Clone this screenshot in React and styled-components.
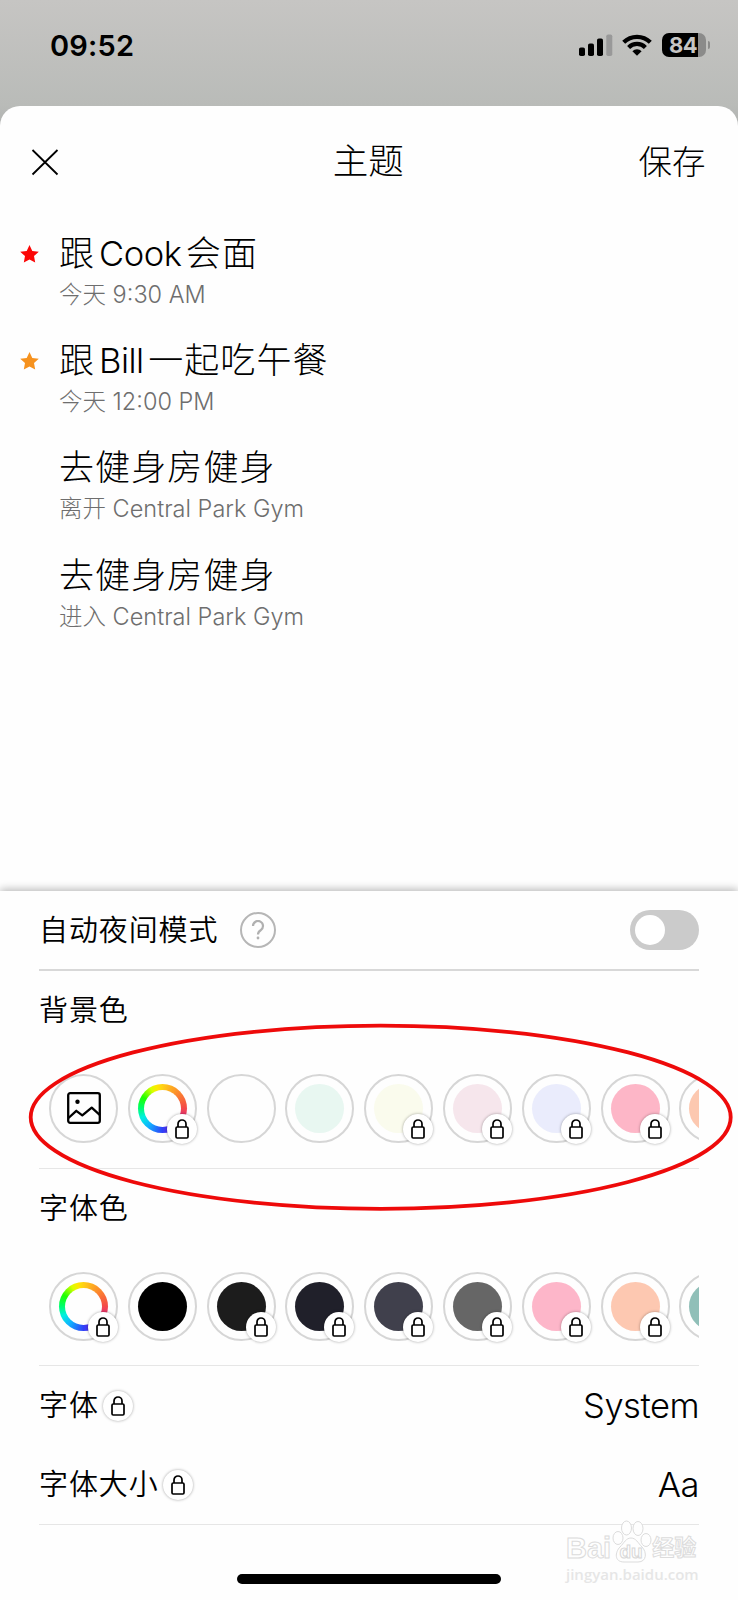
import React from "react";
import styled, { createGlobalStyle } from "styled-components";

const GlobalStyle = createGlobalStyle`
  * {
    box-sizing: border-box;
  }
  body {
    margin: 0;
    background-color: #fefefe;
    color: #000;
    font-family: Inter, "Noto Sans CJK SC", sans-serif;
    font-weight: 300;
  }
`;

const Container = styled.div`
  position: relative;
  width: 738px;
  height: 1600px;
  display: flex;
  flex-direction: column;
  overflow: hidden;
  background: linear-gradient(#c6c5c3, #b9bbb8 106px, #a9abaa 140px);
`;

const StatusBar = styled.div`
  flex: none;
  height: 106px;
  padding: 0 28px 16px 50px;
  display: flex;
  align-items: center;
  justify-content: space-between;
`;
const Time = styled.span`
  font-size: 29px;
  font-weight: 600;
  letter-spacing: 0.2px;
`;
const StatusIcons = styled.div`
  display: flex;
  align-items: center;
`;
const Signal = styled.svg`
  margin-right: 9px;
`;
const Wifi = styled.svg`
  margin-right: 10px;
`;
const Battery = styled.div`
  width: 44px;
  height: 24px;
  padding-right: 2px;
  display: flex;
  align-items: center;
  justify-content: center;
  border-radius: 7px;
  background: linear-gradient(to right, #000 36.5px, #8b8b8a 36.5px);
  color: #c6c5c3;
  font-size: 22px;
  font-weight: 700;
  letter-spacing: -0.5px;
`;
const BatteryTip = styled.div`
  width: 2px;
  height: 8px;
  margin-left: 2px;
  border-radius: 0 3px 3px 0;
  background-color: #8b8b8a;
`;

const Sheet = styled.div`
  flex: 1;
  display: flex;
  flex-direction: column;
  border-radius: 20px 20px 0 0;
  background-color: #fefefe;
`;

const Header = styled.div`
  height: 112px;
  padding: 0 32.5px 0 31px;
  display: grid;
  grid-template-columns: 1fr auto 1fr;
  align-items: center;
`;
const CloseButton = styled.button`
  width: 28px;
  height: 28px;
  padding: 0;
  border: none;
  background: none;
`;
const HeaderTitle = styled.div`
  font-size: 35.5px;
  line-height: 50px;
`;
const SaveButton = styled.button`
  justify-self: end;
  padding: 0;
  border: none;
  background: none;
  color: #000;
  font: inherit;
  font-size: 33.5px;
  line-height: 50px;
`;

const ReminderList = styled.div`
  flex: 1;
  padding-top: 9px;
`;
const Reminder = styled.div`
  height: 107.2px;
  padding: 4px 0 0 20px;
  display: flex;
`;
const StarSlot = styled.div`
  width: 39px;
  height: 46px;
  display: flex;
  align-items: center;
`;
const ReminderTitle = styled.div`
  height: 46px;
  line-height: 45px;
  font-size: 35px;
  letter-spacing: 1.1px;
  white-space: nowrap;
`;
const Latin = styled.span`
  margin: 0 4.5px 0 4px;
  font-size: 34.5px;
  letter-spacing: -0.5px;
`;
const ReminderTime = styled.div`
  height: 34px;
  margin-top: 1px;
  line-height: 33px;
  color: #6e6e6e;
  font-size: 23.5px;
  white-space: nowrap;
`;

const Panel = styled.div`
  height: 709px;
  padding: 0 39px;
  display: flex;
  flex-direction: column;
  background-color: #fefefe;
  box-shadow: 0 -2px 8px rgba(0, 0, 0, 0.27);
`;
const SettingRow = styled.div`
  height: ${(props) => props.$height}px;
  display: flex;
  align-items: center;
  border-bottom: ${(props) => props.$line || "none"};
`;
const Label = styled.div`
  padding-top: 1px;
  font-size: 29px;
  line-height: 40px;
  letter-spacing: 0.9px;
  font-weight: 350;
  white-space: nowrap;
`;
const HelpButton = styled.div`
  width: 36px;
  height: 36px;
  margin-left: 22px;
  display: flex;
  align-items: center;
  justify-content: center;
  border: 2px solid #b6b6b6;
  border-radius: 50%;
  color: #b0b0b0;
`;
const Toggle = styled.div`
  width: 69px;
  height: 40px;
  margin-left: auto;
  padding: 5px;
  border-radius: 20px;
  background-color: #cbcbcb;
`;
const Knob = styled.div`
  width: 30px;
  height: 30px;
  border-radius: 50%;
  background-color: #fff;
`;
const Value = styled.div`
  margin-left: auto;
  font-size: 34.5px;
  letter-spacing: -0.5px;
`;

const ColorSection = styled.div`
  height: ${(props) => props.$height}px;
  padding-top: 19px;
  border-bottom: 1px solid #e6e6e6;
`;
const Swatches = styled.div`
  height: 120px;
  margin-top: 17px;
  padding-left: 10px;
  display: flex;
  align-items: center;
  gap: 9.8px;
  overflow: hidden;
`;
const Swatch = styled.div`
  position: relative;
  flex: none;
  width: 69px;
  height: 69px;
  display: flex;
  align-items: center;
  justify-content: center;
  border: 2px solid #d6d6d6;
  border-radius: 50%;
`;
const Fill = styled.div`
  width: 49px;
  height: 49px;
  border-radius: 50%;
  background-color: ${(props) => props.$color};
`;
const Wheel = styled.div`
  width: 49px;
  height: 49px;
  padding: 6px;
  border-radius: 50%;
  background: conic-gradient(
    #ffd015,
    #fb8030 50deg,
    #f44a48 88deg,
    #e8307a 112deg,
    #8020e0 145deg,
    #3040f8 180deg,
    #10b0ff 218deg,
    #00f0e0 246deg,
    #00ff60 274deg,
    #20ff00 300deg,
    #d8ff00 330deg,
    #ffe800 345deg,
    #ffd015
  );
`;
const WheelHole = styled.div`
  width: 37px;
  height: 37px;
  border-radius: 50%;
  background-color: #fefefe;
`;
const LockBadge = styled.div`
  width: 30px;
  height: 30px;
  display: flex;
  align-items: center;
  justify-content: center;
  border-radius: 50%;
  background-color: #fff;
  box-shadow: 0 0 3px rgba(0, 0, 0, 0.36);
`;
const SwatchLock = styled(LockBadge)`
  position: absolute;
  right: -2px;
  bottom: -3px;
`;
const RowLock = styled(LockBadge)`
  margin-left: 4.5px;
`;

const HomeBar = styled.div`
  width: 264px;
  height: 10px;
  margin: auto auto 16px;
  border-radius: 5px;
  background-color: #000;
`;

const Highlight = styled.svg`
  position: absolute;
  left: 0;
  top: 1020px;
`;
const Watermark = styled.div`
  position: absolute;
  left: 566px;
  top: 1518px;
  width: 134px;
  color: #fefefe;
  font-weight: 700;
  white-space: nowrap;
  -webkit-text-stroke: 1px #dcdcdc;
`;
const WatermarkLogo = styled.div`
  height: 46px;
  display: flex;
  align-items: flex-end;
  font-family: "Liberation Sans", "Noto Sans CJK SC", sans-serif;
  font-size: 29px;
  line-height: 32px;
`;
const WatermarkPaw = styled.svg`
  margin: 0 0 0 -1px;
`;
const WatermarkSuffix = styled.span`
  font-size: 22px;
  line-height: 32px;
`;
const WatermarkUrl = styled.div`
  color: #e6e6e6;
  font-family: "Open Sans", sans-serif;
  font-size: 15px;
  line-height: 20px;
  font-weight: 600;
  -webkit-text-stroke: 0;
`;

const backgroundColors = [
  { type: "image" },
  { type: "wheel", locked: true },
  { color: "#fefefe" },
  { color: "#e8f7f1" },
  { color: "#fafbed", locked: true },
  { color: "#f6e6ec", locked: true },
  { color: "#eaecfc", locked: true },
  { color: "#fdb6c7", locked: true },
  { color: "#fcc8b0", locked: true },
];

const fontColors = [
  { type: "wheel", locked: true },
  { color: "#000" },
  { color: "#1c1c1c", locked: true },
  { color: "#20202a", locked: true },
  { color: "#40404c", locked: true },
  { color: "#666", locked: true },
  { color: "#fdb6c9", locked: true },
  { color: "#fdc8b1", locked: true },
  { color: "#90bfb8", locked: true },
];

const LockIcon = () => (
  <svg width="14" height="20" viewBox="0 0 14 20" fill="none" stroke="#000">
    <rect x="1" y="8" width="12" height="11" rx="1.2" strokeWidth="1.7" />
    <path d="M3 8V5a4 4 0 0 1 8 0v3" strokeWidth="1.7" />
  </svg>
);

const ImageIcon = () => (
  <svg width="34" height="32" viewBox="0 0 34 32" fill="none" stroke="#000">
    <rect x="1.2" y="1.2" width="31.6" height="29.6" rx="2" strokeWidth="2.3" />
    <circle cx="10.5" cy="9.7" r="2.2" fill="#000" stroke="none" />
    <path
      d="M1.5 26l7.8-7.2 6 4.6 9.4-7.8 8 7.2"
      strokeWidth="2.3"
      strokeLinejoin="round"
    />
  </svg>
);

const StarIcon = ({ color }) => (
  <svg width="19" height="18" viewBox="0 0 19 18">
    <path
      d="M9.5 0l2.8 5.9 6.5.8-4.8 4.4 1.2 6.5-5.7-3.2-5.7 3.2 1.2-6.5L.2 6.7l6.5-.8z"
      fill={color}
    />
  </svg>
);

function SwatchRow({ items }) {
  return (
    <Swatches>
      {items.map((item, i) => (
        <Swatch key={i}>
          {item.type === "image" && <ImageIcon />}
          {item.type === "wheel" && (
            <Wheel>
              <WheelHole />
            </Wheel>
          )}
          {item.color && <Fill $color={item.color} />}
          {item.locked && (
            <SwatchLock>
              <LockIcon />
            </SwatchLock>
          )}
        </Swatch>
      ))}
    </Swatches>
  );
}

function ReminderItem({ star, title, time }) {
  return (
    <Reminder>
      <StarSlot>{star && <StarIcon color={star} />}</StarSlot>
      <div>
        <ReminderTitle>{title}</ReminderTitle>
        <ReminderTime>{time}</ReminderTime>
      </div>
    </Reminder>
  );
}

export default function App() {
  return (
    <Container lang="zh-CN">
      <GlobalStyle />
      <StatusBar>
        <Time>09:52</Time>
        <StatusIcons>
          <Signal width="34" height="22" viewBox="0 0 34 22">
            <rect x="0" y="13.5" width="6" height="8.5" rx="1.8" />
            <rect x="9" y="9.5" width="6" height="12.5" rx="1.8" />
            <rect x="18" y="4.5" width="6" height="17.5" rx="1.8" />
            <rect x="27.3" y="0.5" width="6" height="21.5" rx="1.8" fill="#999" />
          </Signal>
          <Wifi width="30" height="22" viewBox="0 0 30 22">
            <g fill="none" stroke="#000" strokeWidth="4.2">
              <path d="M1.7 8.3a18.8 18.8 0 0 1 26.6 0" />
              <path d="M6.6 13.4a11.9 11.9 0 0 1 16.8 0" />
            </g>
            <path d="M10.4 17.2a6.5 6.5 0 0 1 9.2 0L15 21.8z" />
          </Wifi>
          <Battery>84</Battery>
          <BatteryTip />
        </StatusIcons>
      </StatusBar>
      <Sheet>
        <Header>
          <CloseButton>
            <svg width="28" height="28" viewBox="0 0 28 28">
              <path d="M1.5 2l25 24.5M26.5 2l-25 24.5" stroke="#000" strokeWidth="1.8" />
            </svg>
          </CloseButton>
          <HeaderTitle>主题</HeaderTitle>
          <SaveButton>保存</SaveButton>
        </Header>
        <ReminderList>
          <ReminderItem
            star="#fb0606"
            title={
              <>
                跟<Latin>Cook</Latin>会面
              </>
            }
            time="今天 9:30 AM"
          />
          <ReminderItem
            star="#f6921e"
            title={
              <>
                跟<Latin>Bill</Latin>一起吃午餐
              </>
            }
            time="今天 12:00 PM"
          />
          <ReminderItem title="去健身房健身" time="离开 Central Park Gym" />
          <ReminderItem title="去健身房健身" time="进入 Central Park Gym" />
        </ReminderList>
        <Panel>
          <SettingRow $height={80} $line="2px solid #d8d8d8">
            <Label>自动夜间模式</Label>
            <HelpButton>
              <svg width="14" height="20" viewBox="0 0 14 20" fill="none">
                <path
                  d="M2 6a5 5 0 1 1 7.7 4.2C7.7 11.5 7 12.2 7 14.5"
                  stroke="currentColor"
                  strokeWidth="2.2"
                />
                <circle cx="7" cy="18" r="1.4" fill="currentColor" />
              </svg>
            </HelpButton>
            <Toggle>
              <Knob />
            </Toggle>
          </SettingRow>
          <ColorSection $height={198}>
            <Label>背景色</Label>
            <SwatchRow items={backgroundColors} />
          </ColorSection>
          <ColorSection $height={197}>
            <Label>字体色</Label>
            <SwatchRow items={fontColors} />
          </ColorSection>
          <SettingRow $height={79}>
            <Label>字体</Label>
            <RowLock>
              <LockIcon />
            </RowLock>
            <Value>System</Value>
          </SettingRow>
          <SettingRow $height={80} $line="1px solid #e6e6e6">
            <Label>字体大小</Label>
            <RowLock>
              <LockIcon />
            </RowLock>
            <Value>Aa</Value>
          </SettingRow>
          <HomeBar />
        </Panel>
      </Sheet>
      <Highlight width="738" height="195" viewBox="0 0 738 195">
        <ellipse
          cx="380.7"
          cy="97.2"
          rx="350"
          ry="91.6"
          fill="none"
          stroke="#ee0a0a"
          strokeWidth="3.8"
        />
      </Highlight>
      <Watermark>
        <WatermarkLogo>
          Bai
          <WatermarkPaw width="42" height="44" viewBox="0 0 42 44">
            <g fill="#fefefe" stroke="#dcdcdc">
              <ellipse cx="8" cy="18" rx="5" ry="6.5" />
              <ellipse cx="16.5" cy="8" rx="5" ry="7" />
              <ellipse cx="28" cy="8.5" rx="5" ry="7" />
              <ellipse cx="36" cy="20" rx="5" ry="6.5" />
              <path d="M21 18c5 0 7 5 11 9 5 5 5 15-4 15H14c-10 0-9-10-4-15 4-4 6-9 11-9z" />
            </g>
            <text
              x="21"
              y="38"
              textAnchor="middle"
              fontSize="19"
              fill="#fefefe"
              stroke="#d8d8d8"
              strokeWidth="1"
            >
              du
            </text>
          </WatermarkPaw>
          <WatermarkSuffix>经验</WatermarkSuffix>
        </WatermarkLogo>
        <WatermarkUrl>jingyan.baidu.com</WatermarkUrl>
      </Watermark>
    </Container>
  );
}
